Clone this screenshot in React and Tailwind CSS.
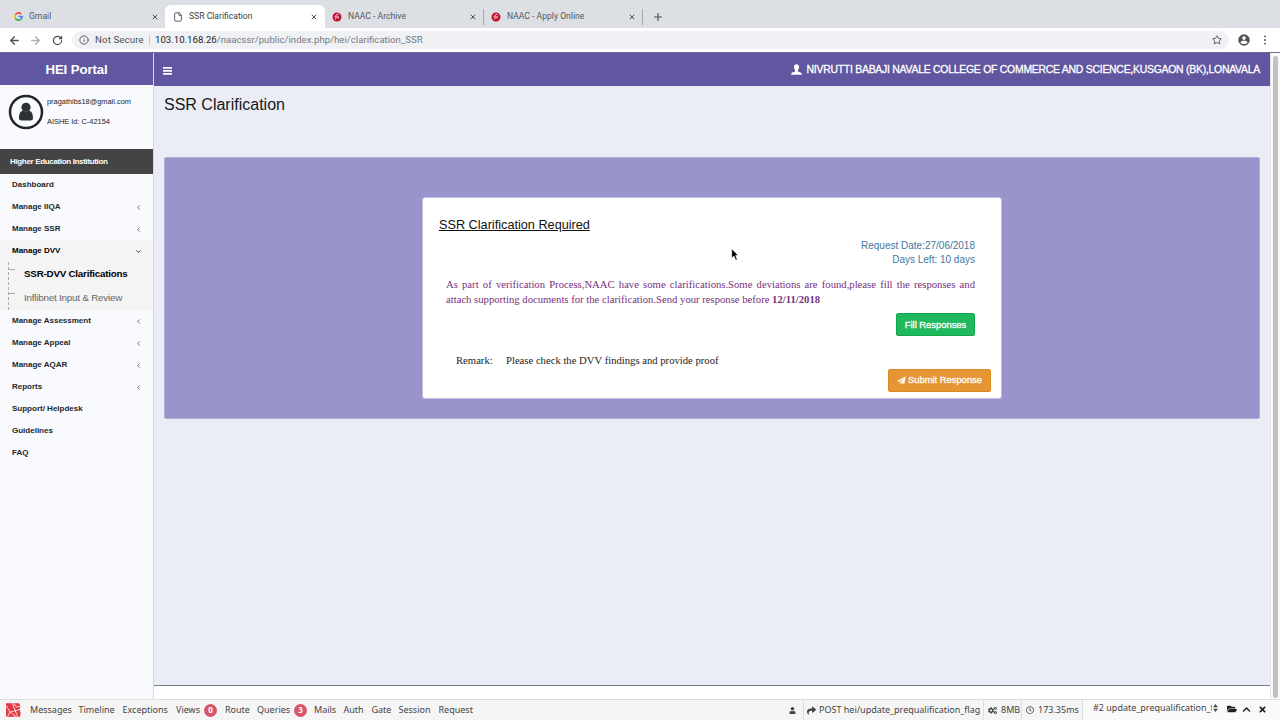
import { FaUser, FaShare, FaCogs, FaRegClock, FaFolderOpen, FaChevronUp, FaTimes } from 'react-icons/fa'
import { ArrowLeft, ArrowRight, RotateCw, Info, Star, File, X, Plus, ChevronLeft, ChevronDown } from 'lucide-react'

const MENU_TOP = [
  { label: 'Dashboard' },
  { label: 'Manage IIQA', children: true },
  { label: 'Manage SSR', children: true },
]

const MENU_BOTTOM = [
  { label: 'Manage Assessment', children: true },
  { label: 'Manage Appeal', children: true },
  { label: 'Manage AQAR', children: true },
  { label: 'Reports', children: true },
  { label: 'Support/ Helpdesk' },
  { label: 'Guidelines' },
  { label: 'FAQ' },
]

const DEBUG_TABS = [
  { label: 'Messages', width: 'w-[48.5px]' },
  { label: 'Timeline', width: 'w-[44px]' },
  { label: 'Exceptions', width: 'w-[53.5px]' },
  { label: 'Views', width: 'w-[49px]', count: 0 },
  { label: 'Route', width: 'w-[32px]' },
  { label: 'Queries', width: 'w-[57px]', count: 3 },
  { label: 'Mails', width: 'w-[29.5px]' },
  { label: 'Auth', width: 'w-[28px]' },
  { label: 'Gate', width: 'w-[27px]' },
  { label: 'Session', width: 'w-[40px]' },
  { label: 'Request', width: 'w-[40px]' },
]

function GoogleIcon() {
  return (
    <svg viewBox="0 0 18 18" className="ml-px size-[9px] shrink-0" fill="none" strokeWidth="3.2">
      <path d="M14.2 4A7.2 7.2 0 0 0 2.6 5.8" stroke="#ea4335" />
      <path d="M2.6 5.8a7.2 7.2 0 0 0 0 6.4" stroke="#fbbc05" />
      <path d="M2.6 12.2a7.2 7.2 0 0 0 10.8 2.5" stroke="#34a853" />
      <path d="M13.4 14.7A7 7 0 0 0 16.2 9H9.2" stroke="#4285f4" />
    </svg>
  )
}

function NaacIcon() {
  return (
    <svg viewBox="0 0 20 20" className="size-[10px] shrink-0">
      <circle cx="10" cy="10" r="9" fill="#bf1230" />
      <path d="M13 4.500c-5-1-6 3-5 5s5 0 6-2M5 8l3 3-1 4M11 11l3 1" stroke="#fbe3e7" strokeWidth="1.800" fill="none" />
    </svg>
  )
}

function GlyphUser() {
  return (
    <svg viewBox="0 0 20 20" className="h-[11px] w-[11px]" fill="currentColor">
      <path d="M10 .5c-3 0-4.700 2.200-4.700 5 0 2.300 1 4.500 2.300 5.700v1.900c-1.400 1-6.600 2.400-7.100 4.200-.2.700-.2 1.700-.2 2.200h19.400c0-.5 0-1.500-.2-2.200-.5-1.800-5.700-3.200-7.100-4.200v-1.900c1.300-1.200 2.300-3.400 2.300-5.700 0-2.800-1.700-5-4.700-5z" />
    </svg>
  )
}

function PaperPlane() {
  return (
    <svg viewBox="0 0 18 18" className="size-[9px]">
      <path d="M17.500.5L14.500 16l-5-2.200L6.800 17.500V13L14.500 4 4.800 11.800.5 10z" fill="#fff" />
    </svg>
  )
}

function LaravelIcon() {
  return (
    <svg viewBox="0 0 15 14" className="h-[14px] w-[15px]">
      <path d="M0 .3h13l1.500 3-1 3 1.200 4-.7 3.400H0z" fill="#e3373e" />
      <path d="M0 2.500l4 6.500 10-2.500M1.500 13.500L4 9M4 9l6 4.500M8 .5l2.500 3.500 4-.8M6.500 .5l5 13" stroke="#fff" strokeWidth=".8" fill="none" />
    </svg>
  )
}

function Tab({ icon, title, width, divider }) {
  return (
    <div className={`flex h-4 items-center ${width} ${divider ? 'border-r border-[#a5a8ad]' : ''}`}>
      {icon}
      <span className="ml-[6px] flex-1 whitespace-nowrap">{title}</span>
      <X className="size-2 text-[#4d5156]" strokeWidth={3} />
    </div>
  )
}

function TabStrip() {
  return (
    <div className="flex h-7 items-center bg-[#dcdfe4] text-[8.6px] text-[#55585d]">
      <div className="flex h-full items-center pl-[13px] pt-[5px]">
        <Tab icon={<GoogleIcon />} title="Gmail" width="w-[146px]" />
      </div>
      <div className="ml-[6px] mt-[5px] flex h-[23px] w-[160px] items-center rounded-t-md bg-white pl-[8px] text-[#3c4043]">
        <Tab icon={<File className="size-[10px]" strokeWidth={2} />} title="SSR Clarification" width="w-[145px]" />
      </div>
      <div className="flex h-full items-center pl-[7px] pt-[5px]">
        <Tab icon={<NaacIcon />} title="NAAC - Archive" width="w-[152px] pr-[6px]" divider />
        <div className="w-[7px]" />
        <Tab icon={<NaacIcon />} title="NAAC - Apply Online" width="w-[152px] pr-[6px]" divider />
        <Plus className="ml-[9px] size-3 text-[#4d5156]" strokeWidth={2.4} />
      </div>
    </div>
  )
}

function AddressBar() {
  return (
    <div className="flex h-[25px] items-center border-b border-[#6f6a92] bg-white text-[#4d5156]">
      <ArrowLeft className="ml-2 size-[13px]" strokeWidth={2.4} />
      <ArrowRight className="ml-2 size-[13px] text-[#abaeb3]" strokeWidth={2.4} />
      <RotateCw className="ml-[10px] size-[11px]" strokeWidth={2.6} />
      <div className="ml-[9px] flex h-[18px] w-[1157px] items-center rounded-full bg-[#f0f1f4] pl-[7px] pr-[7px] text-[9.65px]">
        <Info className="size-[10px]" strokeWidth={2.2} />
        <span className="ml-[6px] w-[50px] whitespace-nowrap tracking-[0.15px]">Not Secure</span>
        <span className="ml-[4px] h-[10px] w-px bg-[#c3c5c9]" />
        <span className="ml-[5px] flex-1 whitespace-nowrap text-[#777a7f]">
          <span className="text-[#202124]">103.10.168.26</span>/naacssr/public/index.php/hei/clarification_SSR
        </span>
        <Star className="size-[10px]" strokeWidth={2.3} />
      </div>
      <svg viewBox="0 0 22 22" className="ml-[9px] size-[12px]">
        <circle cx="11" cy="11" r="10.500" fill="#4d5156" />
        <circle cx="11" cy="7.500" r="3.300" fill="#fff" />
        <path d="M4.500 15.500c0-4 13-4 13 0-2.500 4-10.500 4-13 0z" fill="#fff" />
      </svg>
      <svg viewBox="0 0 4 12" className="ml-[13px] h-[10px] w-[4px]" fill="#4d5156">
        <circle cx="2" cy="1.700" r="1.100" />
        <circle cx="2" cy="6" r="1.100" />
        <circle cx="2" cy="10.300" r="1.100" />
      </svg>
    </div>
  )
}

function MenuItem({ item }) {
  return (
    <div className="flex h-[22px] items-center justify-between pl-3 pr-[11px]">
      <span>{item.label}</span>
      {item.children && <ChevronLeft className="size-[7px] text-[#444]" strokeWidth={2.6} />}
    </div>
  )
}

function Sidebar() {
  return (
    <aside className="flex w-[154px] shrink-0 flex-col border-r border-[#d5d8e2] bg-[#f9fafe]">
      <div className="flex h-[32px] items-center justify-center bg-[#6157a0] pt-[2px] text-[13.2px] font-bold tracking-[-0.1px] text-white">
        HEI Portal
      </div>
      <div className="flex h-[64px] pl-[9px] pt-[9px]">
        <svg viewBox="0 0 36 36" className="-ml-px size-[36px] shrink-0">
          <circle cx="18" cy="18" r="16" fill="none" stroke="#222528" strokeWidth="2.500" />
          <circle cx="18" cy="13.300" r="4.600" fill="#2e3133" />
          <path d="M11 24c0-5 2-7 4-7.500 2 1.600 4 1.600 6 0 2 .5 4 2.500 4 7.500 0 1.800-1 2.500-2.500 2.500h-9C12 26.500 11 25.800 11 24z" fill="#2e3133" />
        </svg>
        <div className="ml-[3px] whitespace-nowrap text-[7.4px] leading-[20px] text-[#222]">
          <div className="-mt-[2px]">pragathibs18@gmail.com</div>
          <div>AISHE Id: C-42154</div>
        </div>
      </div>
      <div className="flex h-[25px] items-center bg-[#444] pl-[10px] text-[8px] font-bold tracking-[-0.34px] text-white">
        Higher Education Institution
      </div>
      <nav className="text-[8px] font-bold text-[#25272b]">
        {MENU_TOP.map((item) => (
          <MenuItem key={item.label} item={item} />
        ))}
        <div className="bg-[#f4f4f5] text-black">
          <div className="flex h-[22px] items-center justify-between pl-3 pr-[11px]">
            <span>Manage DVV</span>
            <ChevronDown className="size-[7px]" strokeWidth={2.6} />
          </div>
          <ul className="ml-2 h-12 border-l border-dashed border-[#aaa]">
            <li className="flex h-6 items-center">
              <span className="mb-[10px] w-[6px] border-t border-dashed border-[#aaa]" />
              <span className="ml-[9px] text-[9.8px] tracking-[-0.22px]">SSR-DVV Clarifications</span>
            </li>
            <li className="flex h-6 items-center">
              <span className="mb-[10px] w-[6px] border-t border-dashed border-[#aaa]" />
              <span className="ml-[9px] text-[9.8px] font-normal tracking-[-0.2px] text-[#666]">
                Inflibnet Input &amp; Review
              </span>
            </li>
          </ul>
        </div>
        {MENU_BOTTOM.map((item) => (
          <MenuItem key={item.label} item={item} />
        ))}
      </nav>
    </aside>
  )
}

function ClarificationCard() {
  return (
    <div className="h-[202px] w-[580px] rounded-[3px] border border-[#c4bfe0] bg-white">
      <h2 className="ml-[16px] mt-[19px] h-[22px] text-[12.7px] leading-4 text-[#111] underline underline-offset-1">
        SSR Clarification Required
      </h2>
      <div className="mr-[26px] text-right text-[10px] leading-[14px] text-[#41799f]">
        <div>Request Date:27/06/2018</div>
        <div>Days Left: 10 days</div>
      </div>
      <p className="ml-[23px] mt-[10px] w-[529px] text-justify font-['Liberation_Serif',serif] text-[10.66px] leading-[15px] text-[#76317c]">
        As part of verification Process,NAAC have some clarifications.Some deviations are found,please fill the
        responses and attach supporting documents for the clarification.Send your response before <b>12/11/2018</b>
      </p>
      <div className="mr-[26px] mt-[6px] flex justify-end">
        <button className="h-[23px] w-[79px] rounded-[2px] border border-[#12a64e] bg-[#20b85d] pt-px text-[9.4px] text-white [-webkit-text-stroke:0.3px_white]">
          Fill Responses
        </button>
      </div>
      <div className="ml-[33px] mt-[17px] flex font-['Liberation_Serif',serif] text-[10.66px] leading-4 text-[#222]">
        <span className="w-[50px]">Remark:</span>
        <span>Please check the DVV findings and provide proof</span>
      </div>
      <div className="mr-[10px] flex justify-end">
        <button className="flex h-[23px] w-[103px] items-center justify-center gap-[2px] rounded-[2px] border border-[#d88b23] bg-[#e59632] text-[9.4px] text-white [-webkit-text-stroke:0.3px_white]">
          <PaperPlane />
          <span>Submit Response</span>
        </button>
      </div>
    </div>
  )
}

function Main() {
  return (
    <main className="flex flex-1 flex-col bg-[#eaedf6]">
      <header className="flex h-[33px] items-center justify-between bg-[#6157a0] pl-[9px] pr-[10px] text-white">
        <svg viewBox="0 0 9 8" className="mt-[2px] h-[8px] w-[9px]" fill="#fff">
          <path d="M0 0h9v1.800H0zM0 3h9v1.800H0zM0 6h9v1.800H0z" />
        </svg>
        <div className="flex items-center gap-[5px] whitespace-nowrap pt-px text-[10.4px] tracking-[-0.23px] [-webkit-text-stroke:0.3px_white]">
          <GlyphUser />
          <span>NIVRUTTI BABAJI NAVALE COLLEGE OF COMMERCE AND SCIENCE,KUSGAON (BK),LONAVALA</span>
        </div>
      </header>
      <h1 className="ml-[10px] mt-[8px] h-[63px] text-[16px] leading-[22px] text-[#17181b]">SSR Clarification</h1>
      <section className="ml-[10px] flex h-[262px] w-[1096px] justify-center rounded-[2px] border border-[#b4b0dc] bg-[#9994cc] pt-[39px]">
        <ClarificationCard />
      </section>
      <footer className="mt-auto h-[14px] border-t border-[#7b7d86] bg-white" />
    </main>
  )
}

function DebugBar() {
  return (
    <div className="flex h-[21px] items-center border-t border-[#ddd] bg-[#f5f5f5] pl-[6px] font-['Noto_Sans',sans-serif] text-[9px] text-[#444]">
      <LaravelIcon />
      <div className="ml-[9px] flex">
        {DEBUG_TABS.map((tab) => (
          <div key={tab.label} className={`flex items-center whitespace-nowrap ${tab.width}`}>
            <span>{tab.label}</span>
            {tab.count !== undefined && (
              <span className="ml-[4px] flex size-[13px] items-center justify-center rounded-full bg-[#d9566a] text-[8px] font-bold text-white">
                {tab.count}
              </span>
            )}
          </div>
        ))}
      </div>
      <div className="ml-auto flex h-full items-center whitespace-nowrap">
        <FaUser className="mr-[7px] size-[7px]" />
        <div className="flex h-full w-[180px] items-center gap-[3px] border-l border-[#ddd] pl-[3px]">
          <FaShare className="size-[9px] shrink-0" />
          <span>POST hei/update_prequalification_flag</span>
        </div>
        <div className="flex h-full w-[38px] items-center gap-[4px] border-l border-[#ddd] pl-[4px]">
          <FaCogs className="size-[9px] shrink-0" />
          <span>8MB</span>
        </div>
        <div className="flex h-full w-[61px] items-center gap-[4px] border-l border-[#ddd] pl-[4px]">
          <FaRegClock className="size-[8px] shrink-0" />
          <span>173.35ms</span>
        </div>
        <div className="flex h-full w-[198px] items-center border-l border-[#ddd] bg-[#fafafa] pb-[4px] pl-[10px]">
          <span className="w-[119px] overflow-hidden">#2 update_prequalification_flag</span>
          <svg viewBox="0 0 6 10" className="ml-[1px] h-[8px] w-[5px]" fill="#444">
            <path d="M3 0l3 4H0zM3 10l3-4H0z" />
          </svg>
          <FaFolderOpen className="ml-[9px] mt-[2px] size-[10px] text-[#222]" />
          <FaChevronUp className="ml-[5px] mt-[3px] size-[9px] text-[#222]" />
          <FaTimes className="ml-[7px] mt-[2px] size-[9px] text-[#222]" />
        </div>
      </div>
    </div>
  )
}

export default function App() {
  return (
    <div className="relative flex h-[720px] w-[1280px] flex-col overflow-hidden bg-white font-['Liberation_Sans',sans-serif]">
      <div className="font-['Roboto',sans-serif]">
        <TabStrip />
        <AddressBar />
      </div>
      <div className="flex h-[646px]">
        <Sidebar />
        <Main />
        <div className="flex w-[10px] justify-center border-l border-[#e4e4e4] bg-[#fafafa] pt-[3px]">
          <div className="h-[642px] w-[5px] rounded-full bg-[#c1c1c1]" />
        </div>
      </div>
      <DebugBar />
      <svg viewBox="0 0 12 19" className="absolute left-[731px] top-[248px] h-[13px] w-[8px]">
        <path d="M1 1v14l3.500-3 2.500 6 2.500-1-2.500-6H11z" fill="#000" stroke="#fff" strokeWidth="1" />
      </svg>
    </div>
  )
}
